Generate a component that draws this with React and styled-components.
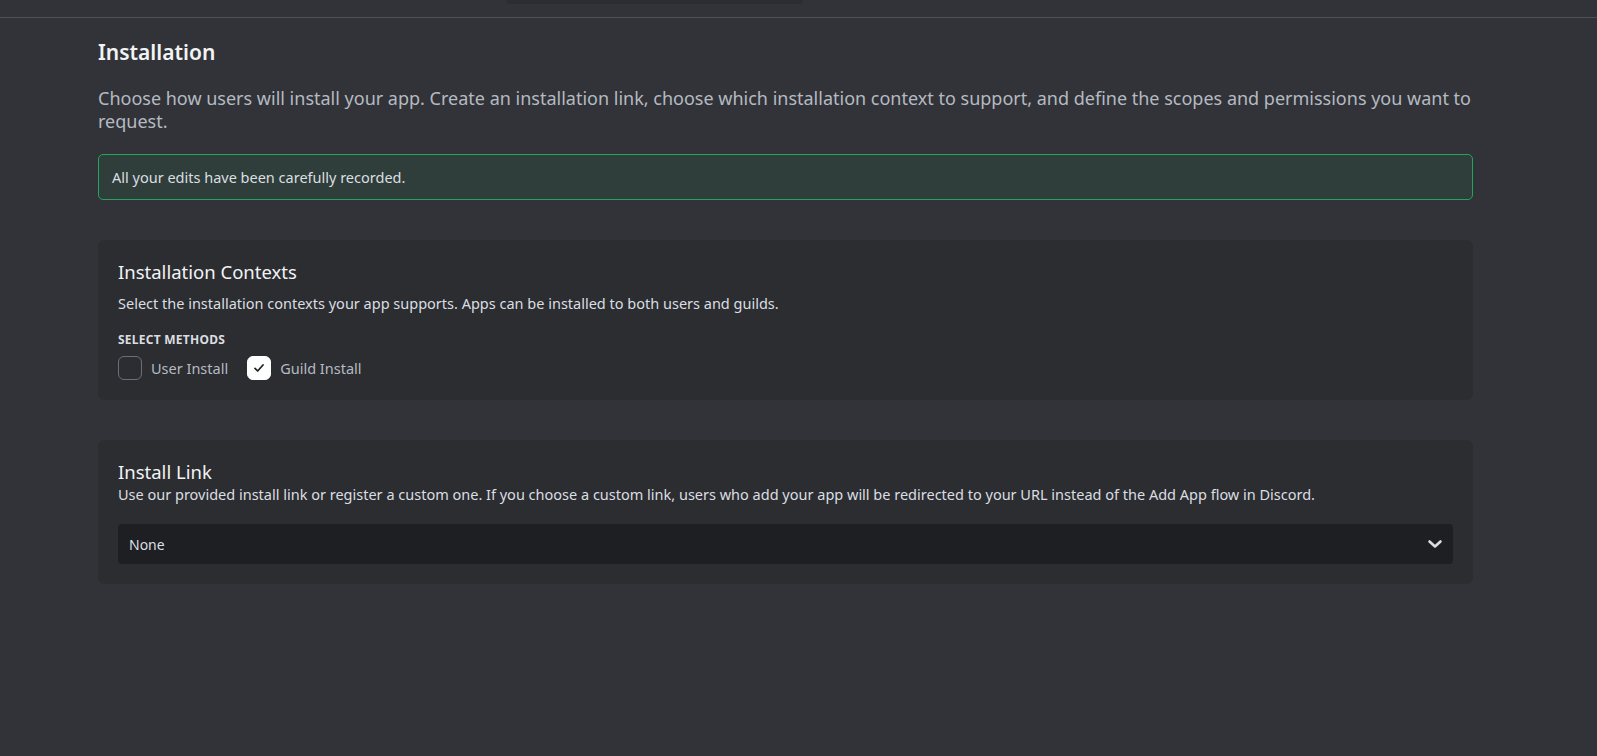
import React, { useState } from 'react';
import styled, { createGlobalStyle } from 'styled-components';

const GlobalStyle = createGlobalStyle`
  html, body {
    margin: 0;
    padding: 0;
    background: #313338;
  }
  body {
    font-family: "Noto Sans", "Liberation Sans", sans-serif;
    color: #dbdee1;
    min-height: 756px;
  }
`;

const Page = styled.div`
  min-height: 756px;
  background: #313338;
`;

const TopBar = styled.div`
  height: 17px;
  border-bottom: 1px solid #4e5058;
  padding-left: 506px;
  box-sizing: content-box;
`;

const SearchStub = styled.div`
  width: 297px;
  height: 4px;
  background: #2b2d31;
  border-radius: 0 0 8px 8px;
`;

const Content = styled.main`
  padding: 21px 124px 0 98px;
  display: flex;
  flex-direction: column;
`;

const PageTitle = styled.h1`
  margin: 0;
  font-size: 21px;
  line-height: 26px;
  font-weight: 600;
  color: #f2f3f5;
`;

const PageDescription = styled.p`
  margin: 22px 0 0;
  font-size: 18px;
  line-height: 23px;
  color: #b5bac1;
`;

const Notice = styled.div`
  margin-top: 21px;
  height: 44px;
  display: flex;
  align-items: center;
  padding: 0 13px;
  border: 1px solid #23a55a;
  border-radius: 5px;
  background: #303e3b;
  font-size: 14.5px;
  color: #dbdee1;
`;

const Card = styled.section`
  margin-top: 40px;
  padding: 20px;
  background: #2b2d31;
  border-radius: 6px;
  display: flex;
  flex-direction: column;
`;

const CardTitle = styled.h2`
  margin: 0 0 ${(p) => (p.$tight ? '0' : '9px')};
  font-size: 18.5px;
  line-height: 24px;
  font-weight: 400;
  color: #f2f3f5;
`;

const CardText = styled.p`
  margin: 0;
  font-size: 14.5px;
  line-height: 20px;
  color: #dbdee1;
`;

const FieldLabel = styled.div`
  margin: 19px 0 8px;
  font-size: 12px;
  line-height: 16px;
  font-weight: 700;
  letter-spacing: 0.25px;
  text-transform: uppercase;
  color: #dbdee1;
`;

const Methods = styled.div`
  display: flex;
  align-items: center;
  gap: 19px;
`;

const Method = styled.label`
  display: flex;
  align-items: center;
  gap: 9px;
  cursor: pointer;
  font-size: 14.5px;
  color: #b5bac1;
`;

const Box = styled.span`
  width: 24px;
  height: 24px;
  box-sizing: border-box;
  border-radius: 6px;
  border: 1px solid ${(p) => (p.$checked ? '#ffffff' : '#6d6f78')};
  background: ${(p) => (p.$checked ? '#ffffff' : 'transparent')};
  display: flex;
  align-items: center;
  justify-content: center;
`;

const Select = styled.div`
  margin-top: 20px;
  height: 40px;
  display: flex;
  align-items: center;
  justify-content: space-between;
  padding: 0 6px 0 11px;
  background: #1e1f22;
  border-radius: 4px;
  font-size: 14px;
  color: #dbdee1;
  cursor: pointer;
`;

const Checkbox = ({ checked, label, onToggle }) => (
  <Method onClick={onToggle}>
    <Box $checked={checked}>
      {checked && (
        <svg width="16" height="16" viewBox="0 0 24 24" fill="none">
          <path d="M6 12.5l4 4 8-9" stroke="#1e1f22" strokeWidth="2.6" strokeLinecap="round" strokeLinejoin="round" />
        </svg>
      )}
    </Box>
    {label}
  </Method>
);

export default function App() {
  const [userInstall, setUserInstall] = useState(false);
  const [guildInstall, setGuildInstall] = useState(true);

  return (
    <Page>
      <GlobalStyle />
      <TopBar>
        <SearchStub />
      </TopBar>
      <Content>
        <PageTitle>Installation</PageTitle>
        <PageDescription>
          Choose how users will install your app. Create an installation link, choose which installation context to support, and define the scopes and permissions you want to request.
        </PageDescription>
        <Notice>All your edits have been carefully recorded.</Notice>

        <Card>
          <CardTitle>Installation Contexts</CardTitle>
          <CardText>Select the installation contexts your app supports. Apps can be installed to both users and guilds.</CardText>
          <FieldLabel>Select Methods</FieldLabel>
          <Methods>
            <Checkbox checked={userInstall} label="User Install" onToggle={() => setUserInstall(!userInstall)} />
            <Checkbox checked={guildInstall} label="Guild Install" onToggle={() => setGuildInstall(!guildInstall)} />
          </Methods>
        </Card>

        <Card>
          <CardTitle $tight>Install Link</CardTitle>
          <CardText>
            Use our provided install link or register a custom one. If you choose a custom link, users who add your app will be redirected to your URL instead of the Add App flow in Discord.
          </CardText>
          <Select>
            <span>None</span>
            <svg width="24" height="24" viewBox="0 0 24 24" fill="none">
              <path d="M6.5 9.5l5.5 5 5.5-5" stroke="#dbdee1" strokeWidth="2.6" strokeLinecap="round" strokeLinejoin="round" />
            </svg>
          </Select>
        </Card>
      </Content>
    </Page>
  );
}
